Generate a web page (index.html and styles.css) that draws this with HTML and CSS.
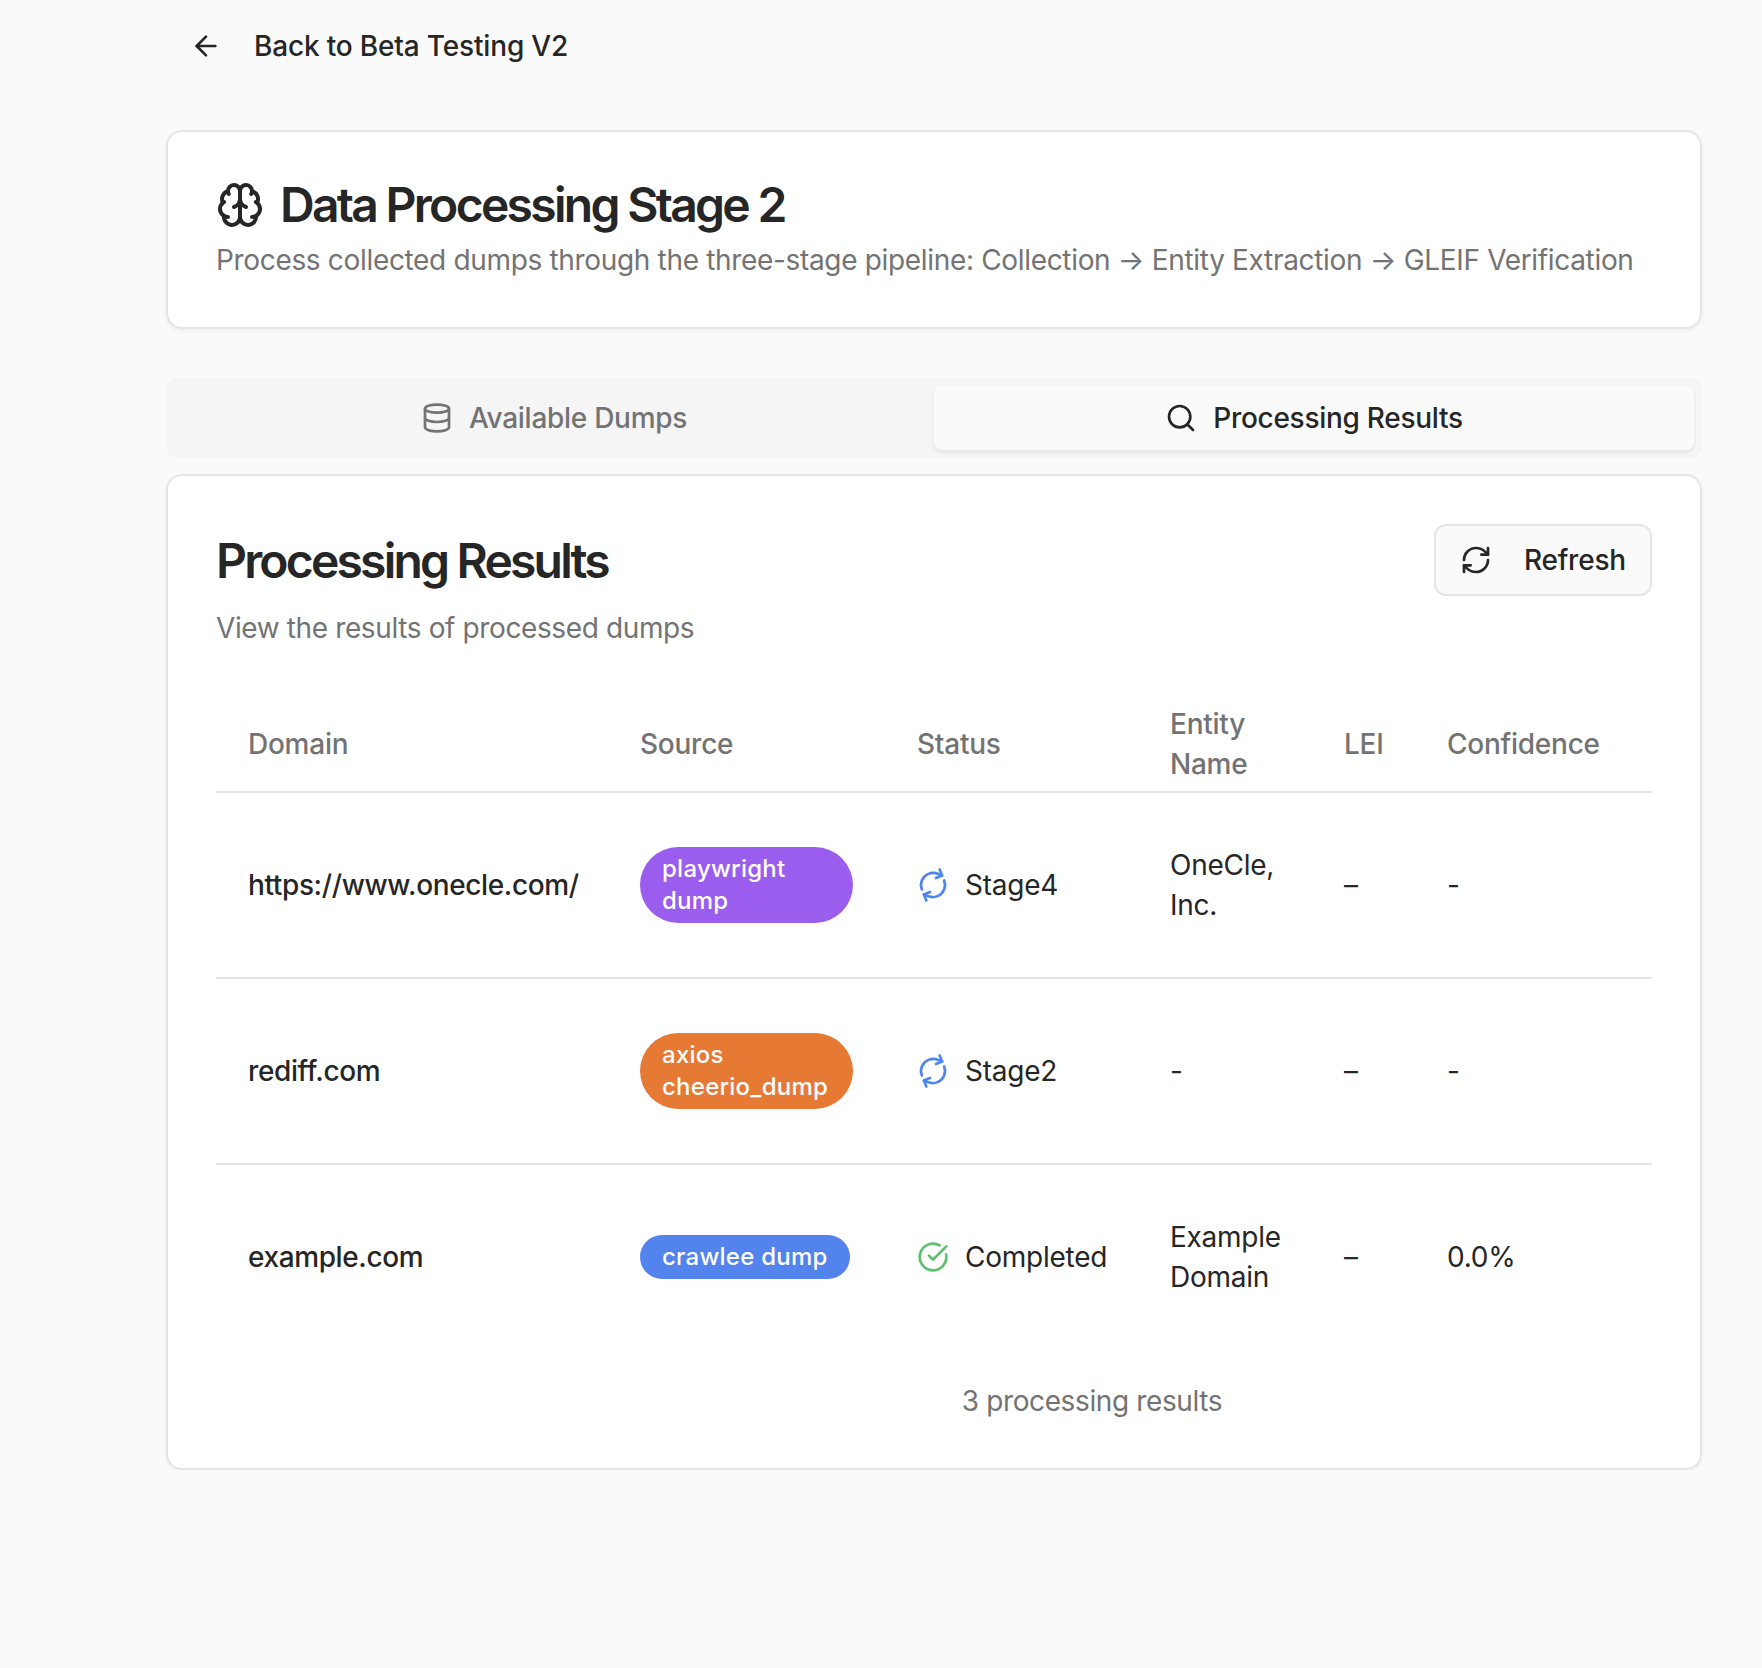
FILE: index.html
```html
<!DOCTYPE html>
<html lang="en">
<head>
  <meta charset="UTF-8">
  <meta name="viewport" content="width=device-width, initial-scale=1.0">
  <title>Data Processing Stage 2</title>
  <link rel="stylesheet" href="styles.css">
</head>
<body>
  <div class="container">
    <a class="back-link" href="#">
      <svg class="icon" viewBox="0 0 24 24"><path d="m12 19-7-7 7-7"/><path d="M19 12H5"/></svg>
      <span>Back to Beta Testing V2</span>
    </a>

    <div class="card page-header">
      <h1>
        <svg class="icon-lg" viewBox="0 0 24 24">
          <path d="M12 5a3 3 0 1 0-5.997.125 4 4 0 0 0-2.526 5.77 4 4 0 0 0 .556 6.588A4 4 0 1 0 12 18Z"/>
          <path d="M12 5a3 3 0 1 1 5.997.125 4 4 0 0 1 2.526 5.77 4 4 0 0 1-.556 6.588A4 4 0 1 1 12 18Z"/>
          <path d="M15 13a4.5 4.5 0 0 1-3-4 4.5 4.5 0 0 1-3 4"/>
          <path d="M17.599 6.5a3 3 0 0 0 .399-1.375"/>
          <path d="M6.003 5.125A3 3 0 0 0 6.401 6.5"/>
          <path d="M3.477 10.896a4 4 0 0 1 .585-.396"/>
          <path d="M19.938 10.5a4 4 0 0 1 .585.396"/>
          <path d="M6 18a4 4 0 0 1-1.967-.516"/>
          <path d="M19.967 17.484A4 4 0 0 1 18 18"/>
        </svg>
        Data Processing Stage 2
      </h1>
      <p class="muted">Process collected dumps through the three-stage pipeline: Collection → Entity Extraction → GLEIF Verification</p>
    </div>

    <div class="tabs">
      <button class="tab">
        <svg class="icon" viewBox="0 0 24 24"><ellipse cx="12" cy="5" rx="9" ry="3"/><path d="M3 5V19A9 3 0 0 0 21 19V5"/><path d="M3 12A9 3 0 0 0 21 12"/></svg>
        Available Dumps
      </button>
      <button class="tab active">
        <svg class="icon" viewBox="0 0 24 24"><circle cx="11" cy="11" r="8"/><path d="m21 21-4.3-4.3"/></svg>
        Processing Results
      </button>
    </div>

    <div class="card results">
      <div class="results-head">
        <div>
          <h2>Processing Results</h2>
          <p class="muted">View the results of processed dumps</p>
        </div>
        <button class="refresh">
          <svg class="icon" viewBox="0 0 24 24"><path d="M3 12a9 9 0 0 1 9-9 9.75 9.75 0 0 1 6.74 2.74L21 8"/><path d="M21 3v5h-5"/><path d="M21 12a9 9 0 0 1-9 9 9.75 9.75 0 0 1-6.74-2.74L3 16"/><path d="M8 16H3v5"/></svg>
          Refresh
        </button>
      </div>

      <table>
        <colgroup>
          <col class="col-domain">
          <col class="col-source">
          <col class="col-status">
          <col class="col-entity">
          <col class="col-lei">
          <col class="col-conf">
        </colgroup>
        <thead>
          <tr>
            <th>Domain</th>
            <th>Source</th>
            <th>Status</th>
            <th>Entity Name</th>
            <th>LEI</th>
            <th>Confidence</th>
          </tr>
        </thead>
        <tbody>
          <tr>
            <td class="domain">https://www.onecle.com/</td>
            <td><span class="badge purple">playwright dump</span></td>
            <td>
              <div class="status">
                <svg class="icon spin" viewBox="0 0 24 24"><path d="M3 12a9 9 0 0 1 9-9 9.75 9.75 0 0 1 6.74 2.74L21 8"/><path d="M21 3v5h-5"/><path d="M21 12a9 9 0 0 1-9 9 9.75 9.75 0 0 1-6.74-2.74L3 16"/><path d="M8 16H3v5"/></svg>
                Stage4
              </div>
            </td>
            <td>OneCle, Inc.</td>
            <td>–</td>
            <td>-</td>
          </tr>
          <tr>
            <td class="domain">rediff.com</td>
            <td><span class="badge orange">axios cheerio_dump</span></td>
            <td>
              <div class="status">
                <svg class="icon spin" viewBox="0 0 24 24"><path d="M3 12a9 9 0 0 1 9-9 9.75 9.75 0 0 1 6.74 2.74L21 8"/><path d="M21 3v5h-5"/><path d="M21 12a9 9 0 0 1-9 9 9.75 9.75 0 0 1-6.74-2.74L3 16"/><path d="M8 16H3v5"/></svg>
                Stage2
              </div>
            </td>
            <td>-</td>
            <td>–</td>
            <td>-</td>
          </tr>
          <tr>
            <td class="domain">example.com</td>
            <td><span class="badge blue">crawlee dump</span></td>
            <td>
              <div class="status">
                <svg class="icon done" viewBox="0 0 24 24"><path d="M21.801 10A10 10 0 1 1 17 3.335"/><path d="m9 11 3 3L22 4"/></svg>
                Completed
              </div>
            </td>
            <td>Example Domain</td>
            <td>–</td>
            <td>0.0%</td>
          </tr>
        </tbody>
      </table>

      <p class="muted results-count">3 processing results</p>
    </div>
  </div>
</body>
</html>
```

FILE: styles.css
```css
* {
  box-sizing: border-box;
}

body {
  font-family: Inter, "Liberation Sans", sans-serif;
  font-size: 28px;
  line-height: 40px;
  letter-spacing: -0.25px;
  background-color: #fafafa;
  color: #262626;
  margin: 0;
  padding: 0;
}

.container {
  width: 1536px;
  margin-left: 166px;
}

.icon {
  width: 32px;
  height: 32px;
  flex-shrink: 0;
  fill: none;
  stroke: currentColor;
  stroke-width: 2;
  stroke-linecap: round;
  stroke-linejoin: round;
}

.icon-lg {
  width: 48px;
  height: 48px;
  flex-shrink: 0;
  fill: none;
  stroke: currentColor;
  stroke-width: 2;
  stroke-linecap: round;
  stroke-linejoin: round;
}

.back-link {
  display: inline-flex;
  align-items: center;
  gap: 32px;
  height: 72px;
  margin: 10px 0 48px;
  padding: 0 24px;
  color: #262626;
  font-weight: 500;
  letter-spacing: -0.17px;
  text-decoration: none;
}

.card {
  background-color: white;
  border: 2px solid #e5e5e5;
  border-radius: 16px;
  box-shadow: 0 2px 4px rgba(0, 0, 0, 0.05);
}

.muted {
  margin: 0;
  color: #737373;
  letter-spacing: -0.38px;
}

.page-header {
  height: 199px;
  padding: 49px 48px 0;
}

h1 {
  display: flex;
  align-items: center;
  gap: 16px;
  margin: 0;
  font-size: 48px;
  line-height: 48px;
  font-weight: 600;
  letter-spacing: -2.7px;
}

.page-header .muted {
  margin-top: 11px;
  letter-spacing: -0.33px;
}

.tabs {
  display: grid;
  grid-template-columns: 1fr 1fr;
  height: 80px;
  margin-top: 49px;
  padding: 8px;
  background-color: #f5f5f5;
  border-radius: 12px;
}

.tab {
  display: flex;
  align-items: center;
  justify-content: center;
  gap: 16px;
  border: none;
  border-radius: 8px;
  background: none;
  color: #737373;
  font: inherit;
  font-weight: 500;
  letter-spacing: -0.28px;
}

.tab.active {
  background-color: #fafafa;
  color: #262626;
  box-shadow: 0 2px 4px rgba(0, 0, 0, 0.08);
}

.results {
  height: 996px;
  margin-top: 16px;
  padding: 48px;
}

.results-head {
  display: flex;
  justify-content: space-between;
  align-items: flex-start;
}

h2 {
  margin: 1px 0 11px;
  font-size: 48px;
  line-height: 72px;
  font-weight: 600;
  letter-spacing: -2.8px;
}

.refresh {
  display: flex;
  align-items: center;
  gap: 32px;
  height: 72px;
  padding: 0 24px;
  border: 2px solid #e5e5e5;
  border-radius: 12px;
  background-color: #fafafa;
  color: #262626;
  font: inherit;
  font-weight: 500;
  letter-spacing: -0.2px;
}

table {
  width: 100%;
  margin-top: 48px;
  border-collapse: collapse;
  table-layout: fixed;
}

.col-domain { width: 392px; }
.col-source { width: 277px; }
.col-status { width: 253px; }
.col-entity { width: 174px; }
.col-lei { width: 103px; }
.col-conf { width: 237px; }

th {
  height: 96px;
  padding: 0 32px;
  border-bottom: 2px solid #e5e5e5;
  color: #737373;
  font-weight: 500;
  text-align: left;
}

th:nth-child(n+3), td:nth-child(n+3) {
  padding-right: 16px;
}

td {
  height: 186px;
  padding: 32px;
  border-bottom: 2px solid #e5e5e5;
}

.domain {
  font-weight: 500;
  letter-spacing: -0.38px;
}

tbody tr:last-child td {
  height: 184px;
  border-bottom: none;
}

.badge {
  display: inline-block;
  padding: 6px 22px;
  border-radius: 999px;
  color: white;
  font-size: 24px;
  line-height: 32px;
  font-weight: 500;
  letter-spacing: 0.25px;
}

.purple { background-color: #9b5dee; }
.orange { background-color: #e67a35; }
.blue { background-color: #5383ec; }

.status {
  display: flex;
  align-items: center;
  gap: 16px;
}

.spin {
  color: #4f86ec;
  transform: rotate(-22deg);
}

.done {
  color: #5cc16f;
}

.results-count {
  margin-top: 33px;
  padding-left: 316px;
  text-align: center;
}
```
